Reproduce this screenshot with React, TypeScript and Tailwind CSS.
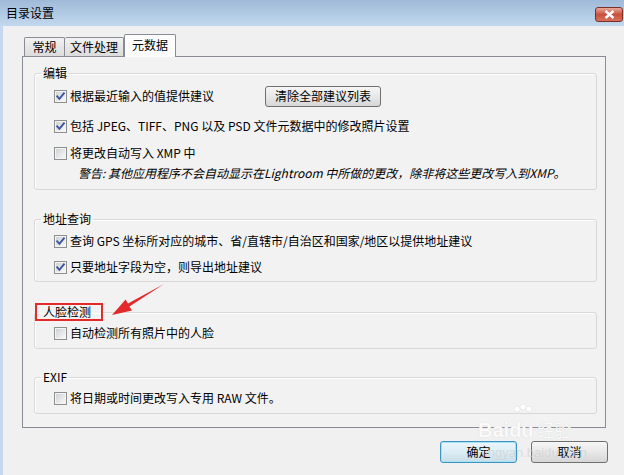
import React from "react";

const Check = ({ checked }: { checked?: boolean }) => (
  <span className="relative inline-flex w-[13px] h-[13px] shrink-0 border border-[#8e8f8f] bg-white items-center justify-center">
    <span className="w-[9px] h-[9px] bg-gradient-to-br from-[#cfd2d6] to-[#f8f8f8] border border-[#f4f4f4] box-content -m-[1px]" />
    {checked && (
      <svg className="absolute left-0 top-0" width="11" height="11" viewBox="0 0 11 11">
        <path d="M2.2 5.4 L4.4 7.9 L8.9 2.4" fill="none" stroke="#3b56a0" strokeWidth="1.9" strokeLinecap="square" />
      </svg>
    )}
  </span>
);

const Row = ({ checked, h, children }: { checked?: boolean; h: string; children: React.ReactNode }) => (
  <div className={`flex items-center ${h}`}>
    <Check checked={checked} />
    <span className="ml-[3px] leading-[16px] whitespace-nowrap">{children}</span>
  </div>
);

export default function App() {
  return (
    <div className="relative w-[624px] h-[475px] overflow-hidden bg-[#f0f0f0] flex flex-col text-[12px] text-black font-['Noto_Sans_CJK_SC','Liberation_Sans',sans-serif]">
      {/* Title bar */}
      <div className="h-[26px] shrink-0 flex items-start justify-between bg-gradient-to-b from-[#9fbad8] to-[#c2d8ee]">
        <span className="ml-[6px] mt-[5px] leading-[16px]">目录设置</span>
        <div className="mt-[7px] mr-[1px] w-[28px] h-[15px] rounded-[3px] border border-[#7a3026] bg-gradient-to-b from-[#e8a899] via-[#c8503f] to-[#d9705a] flex items-center justify-center">
          <svg width="11" height="9" viewBox="0 0 11 9">
            <path d="M1.5 1 L9.5 8 M9.5 1 L1.5 8" stroke="white" strokeWidth="2.4" strokeLinecap="butt" />
          </svg>
        </div>
      </div>

      {/* Body */}
      <div className="flex-1 flex border-l-[3px] border-[#c4d8ee]">
        <div className="flex-1 flex flex-col pl-[19px] pt-[8px]">
          {/* Tabs */}
          <div className="h-[22px] flex items-start pl-[2px]">
            <div className="mt-[3px] w-[41px] h-[19px] border border-b-0 border-[#898c95] rounded-t-[2px] bg-gradient-to-b from-[#f2f2f2] to-[#dcdcdc] flex items-center justify-center leading-[16px]">
              常规
            </div>
            <div className="mt-[3px] w-[59px] h-[19px] border border-b-0 border-l-0 border-[#898c95] rounded-t-[2px] bg-gradient-to-b from-[#f2f2f2] to-[#dcdcdc] flex items-center justify-center leading-[16px]">
              文件处理
            </div>
            <div className="relative z-10 w-[52px] h-[23px] border border-b-0 border-[#898c95] rounded-t-[2px] bg-[#fcfcfc] flex items-start justify-center pt-[2px] leading-[16px]">
              元数据
            </div>
          </div>

          {/* Panel */}
          <div className="w-[584px] h-[372px] border border-[#898c95] bg-[#f2f2f2] pt-[8px] pl-[11px]">
            {/* 编辑 */}
            <fieldset className="w-[563px] border border-[#d8d8d8] rounded-[3px] shadow-[inset_1px_1px_0_#ffffff]">
              <legend className="ml-[6px] px-[2px] leading-[16px]">编辑</legend>
              <div className="pl-[19px] pb-[8px]">
                <div className="flex items-center h-[30px]">
                  <div className="w-[211px] flex items-center">
                    <Check checked />
                    <span className="ml-[3px] leading-[16px] whitespace-nowrap">根据最近输入的值提供建议</span>
                  </div>
                  <div className="w-[116px] h-[21px] rounded-[3px] border border-[#707070] bg-gradient-to-b from-[#f6f6f6] via-[#e8e8e8] to-[#d6d6d6] flex items-center justify-center leading-[16px]">
                    清除全部建议列表
                  </div>
                </div>
                <Row checked h="h-[30px]">包括 JPEG、TIFF、PNG 以及 PSD 文件元数据中的修改照片设置</Row>
                <Row h="h-[24px]">将更改自动写入 XMP 中</Row>
                <div className="ml-[24px] h-[16px] leading-[16px] italic whitespace-nowrap">
                  警告: 其他应用程序不会自动显示在Lightroom 中所做的更改，除非将这些更改写入到XMP。
                </div>
              </div>
            </fieldset>

            {/* 地址查询 */}
            <fieldset className="mt-[21px] w-[563px] border border-[#d8d8d8] rounded-[3px] shadow-[inset_1px_1px_0_#ffffff]">
              <legend className="ml-[6px] px-[2px] leading-[16px]">地址查询</legend>
              <div className="pl-[19px] pt-[1px] pb-[1px]">
                <Row checked h="h-[26px]">查询 GPS 坐标所对应的城市、省/直辖市/自治区和国家/地区以提供地址建议</Row>
                <Row checked h="h-[26px]">只要地址字段为空，则导出地址建议</Row>
              </div>
            </fieldset>

            {/* 人脸检测 */}
            <fieldset className="mt-[21px] w-[563px] border border-[#d8d8d8] rounded-[3px] shadow-[inset_1px_1px_0_#ffffff]">
              <legend className="ml-0 w-[68px] px-[6px] border-2 border-[#e52a2a] leading-[14px]">人脸检测</legend>
              <div className="pl-[19px] pb-[3px]">
                <Row h="h-[24px]">自动检测所有照片中的人脸</Row>
              </div>
            </fieldset>

            {/* EXIF */}
            <fieldset className="mt-[20px] w-[563px] border border-[#d8d8d8] rounded-[3px] shadow-[inset_1px_1px_0_#ffffff]">
              <legend className="ml-[6px] px-[2px] leading-[16px]">EXIF</legend>
              <div className="pl-[19px] pb-[2px]">
                <Row h="h-[26px]">将日期或时间更改写入专用 RAW 文件。</Row>
              </div>
            </fieldset>
          </div>

          {/* Buttons */}
          <div className="mt-[13px] flex justify-end pr-[16px] gap-[14px]">
            <div className="w-[77px] h-[22px] rounded-[3px] border border-[#3c95c0] bg-gradient-to-b from-[#eaf6fb] via-[#dcedf5] to-[#c9dde6] shadow-[inset_0_0_0_1px_#a8e0f5] flex items-center justify-center leading-[16px]">
              确定
            </div>
            <div className="w-[77px] h-[22px] rounded-[3px] border border-[#707070] bg-gradient-to-b from-[#f6f6f6] via-[#e8e8e8] to-[#d6d6d6] flex items-center justify-center leading-[16px]">
              取消
            </div>
          </div>
        </div>
      </div>

      {/* Annotation arrow */}
      <svg className="absolute left-0 top-0 pointer-events-none" width="624" height="475">
        <polygon
          points="112,315 125.6,299.5 128,303.6 164,284 129.4,306.4 132,310.6"
          fill="#e22a2a"
        />
      </svg>

      {/* Watermark */}
      <div className="absolute left-[478px] top-[420px] pointer-events-none flex items-end text-white/90 font-['Liberation_Sans',sans-serif] text-[20px] font-bold leading-[20px] [text-shadow:0_0_1px_#c8c8c8]">
        <span>Bai</span>
        <span className="relative">
          du
          <svg className="absolute left-[2px] -top-[16px]" width="24" height="18" viewBox="0 0 24 18">
            <circle cx="6" cy="5" r="3" fill="white" stroke="#d8d8d8" strokeWidth="0.5" />
            <circle cx="12" cy="3" r="3" fill="white" stroke="#d8d8d8" strokeWidth="0.5" />
            <circle cx="18" cy="5" r="3" fill="white" stroke="#d8d8d8" strokeWidth="0.5" />
          </svg>
        </span>
        <span className="ml-[4px] text-[17px] font-['Noto_Sans_CJK_SC',sans-serif] font-normal">经验</span>
      </div>
      <div className="absolute left-[482px] top-[446px] pointer-events-none text-[13px] leading-[14px] text-[#d0d0d0]/70 font-['Liberation_Sans',sans-serif]">
        jingyan.baidu.com
      </div>
    </div>
  );
}
